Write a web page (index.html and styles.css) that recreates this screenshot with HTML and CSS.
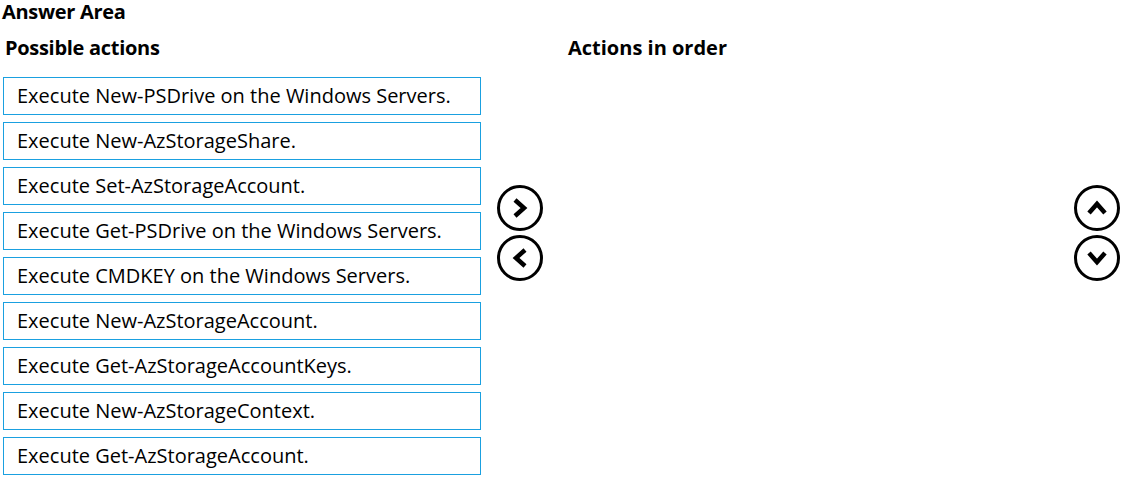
FILE: index.html
```html
<!DOCTYPE html>
<html>
<head>
<meta charset="utf-8">
<link rel="stylesheet" href="styles.css">
</head>
<body>
<div class="page">
  <h1 class="title">Answer Area</h1>
  <div class="area">
    <div class="col-left">
      <h2 class="heading">Possible actions</h2>
      <div class="list">
        <div class="item">Execute New-PSDrive on the Windows Servers.</div>
        <div class="item">Execute New-AzStorageShare.</div>
        <div class="item">Execute Set-AzStorageAccount.</div>
        <div class="item">Execute Get-PSDrive on the Windows Servers.</div>
        <div class="item">Execute CMDKEY on the Windows Servers.</div>
        <div class="item">Execute New-AzStorageAccount.</div>
        <div class="item">Execute Get-AzStorageAccountKeys.</div>
        <div class="item">Execute New-AzStorageContext.</div>
        <div class="item">Execute Get-AzStorageAccount.</div>
      </div>
    </div>
    <div class="mid">
      <svg class="btn" width="48" height="48" viewBox="0 0 48 48"><circle cx="24" cy="24" r="21.5" fill="none" stroke="#000" stroke-width="3"/><path d="M19 16 L28 24 L19 32" fill="none" stroke="#000" stroke-width="4.5"/></svg>
      <svg class="btn" width="48" height="48" viewBox="0 0 48 48"><circle cx="24" cy="24" r="21.5" fill="none" stroke="#000" stroke-width="3"/><path d="M29 16 L20 24 L29 32" fill="none" stroke="#000" stroke-width="4.5"/></svg>
    </div>
    <div class="col-right">
      <h2 class="heading">Actions in order</h2>
    </div>
    <div class="side">
      <svg class="btn" width="48" height="48" viewBox="0 0 48 48"><circle cx="24" cy="24" r="21.5" fill="none" stroke="#000" stroke-width="3"/><path d="M16 29 L24 20 L32 29" fill="none" stroke="#000" stroke-width="4.5"/></svg>
      <svg class="btn" width="48" height="48" viewBox="0 0 48 48"><circle cx="24" cy="24" r="21.5" fill="none" stroke="#000" stroke-width="3"/><path d="M16 19 L24 28 L32 19" fill="none" stroke="#000" stroke-width="4.5"/></svg>
    </div>
  </div>
</div>
</body>
</html>
```
FILE: styles.css
```css
html, body {
  margin: 0;
  padding: 0;
  background: #fff;
}
.page {
  font-family: "Open Sans", "Noto Sans", sans-serif;
  color: #000;
  width: 1125px;
  height: 478px;
  overflow: hidden;
}
.title {
  margin: 0;
  padding-top: 1px;
  padding-left: 2px;
  font-size: 20px;
  font-weight: 700;
  line-height: 21px;
  letter-spacing: -0.3px;
}
.area {
  display: flex;
  padding-left: 3px;
}
.col-left {
  width: 478px;
}
.heading {
  margin: 0;
  font-size: 20px;
  font-weight: 700;
  line-height: 28px;
  padding-top: 12px;
  padding-left: 2px;
  letter-spacing: -0.3px;
}
.list {
  display: flex;
  flex-direction: column;
  gap: 7px;
  padding-top: 15px;
}
.item {
  box-sizing: border-box;
  height: 38px;
  border: 1px solid #1aa0e0;
  padding-left: 13px;
  font-size: 20px;
  line-height: 36px;
  white-space: nowrap;
}
.mid {
  width: 78px;
  display: flex;
  flex-direction: column;
  align-items: center;
  padding-top: 162px;
  gap: 2px;
}
.col-right {
  flex: 1;
}
.col-right .heading {
  padding-left: 9px;
  letter-spacing: 0;
}
.side {
  width: 48px;
  display: flex;
  flex-direction: column;
  padding-top: 162px;
  gap: 2px;
  margin-right: 4px;
}
.btn {
  display: block;
}
```
